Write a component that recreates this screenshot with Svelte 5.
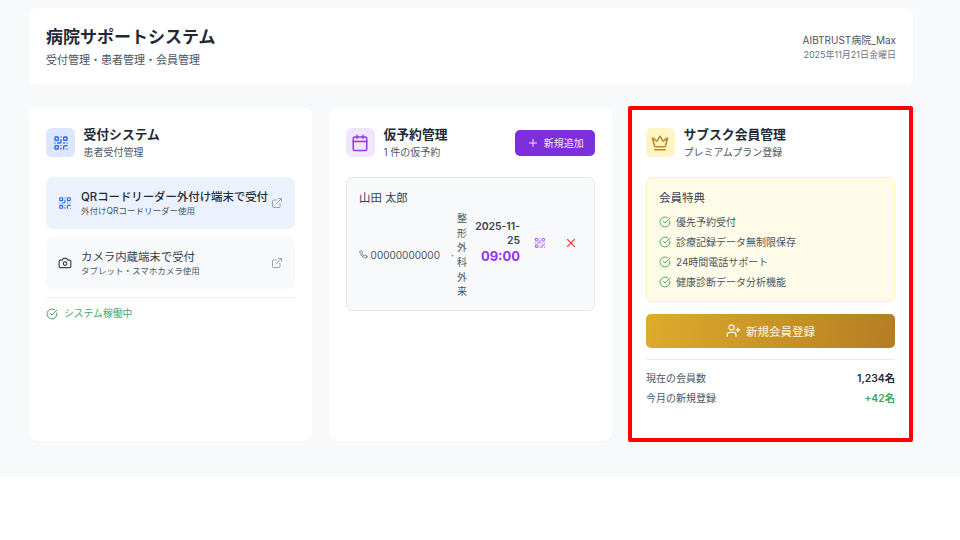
<script>
  const benefits = ['優先予約受付', '診療記録データ無制限保存', '24時間電話サポート', '健康診断データ分析機能'];
</script>

{#snippet qr(size)}
  <svg width={size} height={size} viewBox="0 0 24 24" fill="none" stroke="currentColor" stroke-width="2" stroke-linecap="round" stroke-linejoin="round">
    <rect x="3" y="3" width="5" height="5" rx="1"/><rect x="16" y="3" width="5" height="5" rx="1"/><rect x="3" y="16" width="5" height="5" rx="1"/>
    <path d="M21 16h-3a2 2 0 0 0-2 2v3"/><path d="M21 21v.01"/><path d="M12 7v3a2 2 0 0 1-2 2H7"/><path d="M3 12h.01"/><path d="M12 3h.01"/><path d="M12 16v.01"/><path d="M16 12h1"/><path d="M21 12v.01"/><path d="M12 21v-1"/>
  </svg>
{/snippet}
{#snippet ext()}
  <svg class="ext" width="12" height="12" viewBox="0 0 24 24" fill="none" stroke="currentColor" stroke-width="2" stroke-linecap="round" stroke-linejoin="round">
    <path d="M15 3h6v6"/><path d="M10 14 21 3"/><path d="M18 13v6a2 2 0 0 1-2 2H5a2 2 0 0 1-2-2V8a2 2 0 0 1 2-2h6"/>
  </svg>
{/snippet}
{#snippet check(size)}
  <svg width={size} height={size} viewBox="0 0 24 24" fill="none" stroke="currentColor" stroke-width="2" stroke-linecap="round" stroke-linejoin="round">
    <path d="M21.8 10A10 10 0 1 1 17 3.3"/><path d="m9 11 3 3L22 4"/>
  </svg>
{/snippet}

<div class="page">
  <header class="top">
    <div>
      <h1>病院サポートシステム</h1>
      <p class="lead">受付管理・患者管理・会員管理</p>
    </div>
    <div class="who">
      <div class="user">AIBTRUST病院_Max</div>
      <div class="date">2025年11月21日金曜日</div>
    </div>
  </header>

  <main class="grid">
    <section class="card">
      <div class="head">
        <div class="badge blue">{@render qr(16)}</div>
        <div>
          <h2>受付システム</h2>
          <p class="sub">患者受付管理</p>
        </div>
      </div>
      <button class="opt on">
        <span class="opt-icon blue-t">{@render qr(14)}</span>
        <span class="opt-text"><b class="semi">QRコードリーダー外付け端末で受付</b><small>外付けQRコードリーダー使用</small></span>
        {@render ext()}
      </button>
      <button class="opt">
        <span class="opt-icon">
          <svg width="14" height="14" viewBox="0 0 24 24" fill="none" stroke="currentColor" stroke-width="2" stroke-linecap="round" stroke-linejoin="round"><path d="M14.5 4h-5L7 7H4a2 2 0 0 0-2 2v9a2 2 0 0 0 2 2h16a2 2 0 0 0 2-2V9a2 2 0 0 0-2-2h-3l-2.500-3z"/><circle cx="12" cy="13" r="3"/></svg>
        </span>
        <span class="opt-text"><b>カメラ内蔵端末で受付</b><small>タブレット・スマホカメラ使用</small></span>
        {@render ext()}
      </button>
      <div class="status">{@render check(12)}<span>システム稼働中</span></div>
    </section>

    <section class="card">
      <div class="head">
        <div class="badge purple">
          <svg width="18" height="18" viewBox="0 0 24 24" fill="none" stroke="currentColor" stroke-width="2" stroke-linecap="round" stroke-linejoin="round"><path d="M8 2v4"/><path d="M16 2v4"/><rect x="3" y="4" width="18" height="18" rx="2"/><path d="M3 10h18"/></svg>
        </div>
        <div class="grow">
          <h2>仮予約管理</h2>
          <p class="sub">1 件の仮予約</p>
        </div>
        <button class="add">
          <svg width="12" height="12" viewBox="0 0 24 24" fill="none" stroke="currentColor" stroke-width="2" stroke-linecap="round"><path d="M5 12h14"/><path d="M12 5v14"/></svg>
          <span>新規追加</span>
        </button>
      </div>
      <div class="resv">
        <div class="name">山田 太郎</div>
        <div class="resv-row">
          <div class="phone">
            <svg width="11" height="11" viewBox="0 0 24 24" fill="none" stroke="currentColor" stroke-width="2" stroke-linecap="round" stroke-linejoin="round"><path d="M22 16.900v3a2 2 0 0 1-2.200 2 19.800 19.800 0 0 1-8.600-3.100 19.500 19.500 0 0 1-6-6A19.800 19.800 0 0 1 2.100 4.200 2 2 0 0 1 4.100 2h3a2 2 0 0 1 2 1.700c.1 1 .4 1.900.7 2.800a2 2 0 0 1-.5 2.100L8.100 9.900a16 16 0 0 0 6 6l1.300-1.300a2 2 0 0 1 2.100-.4c.9.300 1.800.6 2.800.7a2 2 0 0 1 1.700 2z"/></svg>
            <span>00000000000</span>
          </div>
          <span class="dot">•</span>
          <div class="dept">整形外科外来</div>
          <div class="when">
            <div class="d">2025-11-25</div>
            <div class="t">09:00</div>
          </div>
          <span class="act qr-a">{@render qr(12)}</span>
          <span class="act x-a">
            <svg width="14" height="14" viewBox="0 0 24 24" fill="none" stroke="currentColor" stroke-width="2" stroke-linecap="round"><path d="M18 6 6 18"/><path d="m6 6 12 12"/></svg>
          </span>
        </div>
      </div>
    </section>

    <section class="card marked">
      <div class="head">
        <div class="badge yellow">
          <svg width="18" height="18" viewBox="0 0 24 24" fill="none" stroke="currentColor" stroke-width="2" stroke-linecap="round" stroke-linejoin="round"><path d="M11.600 3.300a.5.5 0 0 1 .9 0l2.900 5.600a1 1 0 0 0 1.500.3l4.300-3.700a.5.500 0 0 1 .8.500l-2.800 10.200a1 1 0 0 1-1 .7H5.800a1 1 0 0 1-1-.7L2 6a.5.500 0 0 1 .8-.5l4.300 3.700a1 1 0 0 0 1.500-.3z"/><path d="M5 21h14"/></svg>
        </div>
        <div>
          <h2>サブスク会員管理</h2>
          <p class="sub">プレミアムプラン登録</p>
        </div>
      </div>
      <div class="perks">
        <h3>会員特典</h3>
        <ul>
          {#each benefits as b}
            <li>{@render check(12)}<span>{b}</span></li>
          {/each}
        </ul>
      </div>
      <button class="join">
        <svg width="15" height="15" viewBox="0 0 24 24" fill="none" stroke="currentColor" stroke-width="2" stroke-linecap="round" stroke-linejoin="round"><path d="M16 21v-2a4 4 0 0 0-4-4H6a4 4 0 0 0-4 4v2"/><circle cx="9" cy="7" r="4"/><path d="M19 8v6"/><path d="M22 11h-6"/></svg>
        <span>新規会員登録</span>
      </button>
      <div class="stats">
        <div class="stat"><span>現在の会員数</span><b>1,234名</b></div>
        <div class="stat"><span>今月の新規登録</span><b class="plus">+42名</b></div>
      </div>
      <div class="frame"></div>
    </section>
  </main>
</div>

<style>
  :global(body) { margin: 0; background: #fff; }
  .page {
    box-sizing: border-box; height: 477px; padding: 8px 47px 0 29px; background: #f8f9fb;
    font-family: Inter, "Noto Sans CJK JP", sans-serif; color: #1f2937;
  }
  h1, h2, h3, p, ul { margin: 0; padding: 0; }
  button { font-family: inherit; border: 0; cursor: pointer; }
  .top {
    height: 77px; box-sizing: border-box; padding: 0 17px; background: #fff; border-radius: 8px;
    display: flex; justify-content: space-between; align-items: center;
    box-shadow: 0 1px 2px rgba(0,0,0,.02);
  }
  h1 { font-size: 17px; line-height: 24px; font-weight: 700; color: #1f2937; }
  .lead { font-size: 11px; line-height: 16px; color: #4b5563; margin-top: 3px; }
  .who { text-align: right; }
  .user { font-size: 10px; line-height: 14px; font-weight: 400; color: #4b5563; }
  .date { font-size: 9px; line-height: 12px; color: #6b7280; margin-top: 2px; }

  .grid { display: grid; grid-template-columns: repeat(3, 283.200px); column-gap: 16.800px; margin-top: 23px; }
  .card {
    position: relative; box-sizing: border-box; height: 333px; padding: 20px 17px; background: #fff; border-radius: 8px;
    box-shadow: 0 1px 2px rgba(0,0,0,.02);
  }
  .head { display: flex; align-items: center; gap: 8.500px; height: 29px; margin-bottom: 20.400px; }
  .grow { flex: 1; }
  .badge { width: 29px; height: 29px; border-radius: 6px; display: flex; align-items: center; justify-content: center; flex: none; }
  .blue { background: #dbe7fe; color: #2563eb; }
  .purple { background: #f0e6ff; color: #9333ea; }
  .yellow { background: #fef5c3; color: #b8862a; }
  h2 { font-size: 12.800px; line-height: 17px; font-weight: 700; color: #1f2937; }
  .sub { font-size: 10px; line-height: 13px; color: #4b5563; margin-top: 3px; }

  .opt {
    width: 100%; height: 51.500px; margin-bottom: 8.500px; padding: 0 12px; box-sizing: border-box; border-radius: 7px;
    display: flex; align-items: center; background: #f8f9fb; color: #374151; text-align: left;
  }
  .opt.on { background: #ebf2fe; }
  .opt-icon { width: 14px; height: 14px; flex: none; margin-right: 9px; display: block; line-height: 0; color: #374151; }
  .opt-icon.blue-t { color: #2563eb; }
  .opt-text { flex: 1; display: flex; flex-direction: column; min-width: 0; white-space: nowrap; }
  .opt-text b { font-size: 11.400px; line-height: 15px; font-weight: 400; color: #374151; }
  .opt-text b.semi { font-weight: 500; color: #1f2937; }
  .opt-text small { font-size: 8.500px; line-height: 12px; color: #4b5563; }
  .ext { color: #9ca3af; flex: none; margin-left: 4px; }

  .status {
    border-top: 1px solid #eef0f3; padding-top: 9px; display: flex; align-items: center; gap: 6px;
    color: #4aa564; font-size: 9.800px; line-height: 14px;
  }
  .status svg { flex: none; }

  .add {
    width: 80px; height: 26px; border-radius: 5px; background: #7c2fdb; color: #f3e8ff; font-size: 10px;
    display: flex; align-items: center; justify-content: center; gap: 5px; padding: 0; font-weight: 400;
  }
  .resv { border: 1px solid #e5e7eb; background: #f8f9fb; border-radius: 6px; box-sizing: border-box; padding: 11.500px 12px; height: 133.400px; }
  .name { font-size: 11.400px; line-height: 16px; color: #374151; font-weight: 400; }
  .resv-row { display: flex; align-items: center; margin-top: 5px; height: 88px; }
  .phone { flex: none; width: 81px; display: flex; align-items: center; gap: 3px; font-size: 10px; color: #4b5563; }
  .dot { flex: none; width: 3px; font-size: 5px; color: #6b7280; margin-left: 11px; margin-top: 1px; }
  .dept { flex: none; width: 10px; margin-left: 3px; font-size: 10px; line-height: 14.670px; color: #4b5563; text-align: center; word-break: break-all; }
  .when { flex: none; width: 53px; text-align: right; margin-bottom: 25px; }
  .d { font-size: 10.400px; line-height: 14px; font-weight: 600; color: #374151; }
  .t { font-size: 13px; line-height: 17px; font-weight: 700; color: #9333ea; }
  .act { flex: none; display: block; line-height: 0; margin-bottom: 24px; }
  .qr-a { margin-left: 14px; color: #a855f7; }
  .x-a { margin-left: 18px; color: #ef4444; }

  .perks { background: #fefce8; border: 1px solid #fdf3b8; border-radius: 6px; height: 124.300px; box-sizing: border-box; padding: 11.500px 12px; }
  h3 { font-size: 11.500px; line-height: 16px; font-weight: 400; color: #374151; margin-bottom: 6px; }
  ul { list-style: none; }
  li { display: flex; align-items: center; gap: 5px; height: 20px; font-size: 10px; color: #4b5563; }
  li svg { color: #4caf62; flex: none; }
  .join {
    width: 100%; height: 34.300px; margin-top: 12px; border-radius: 5px; color: #fdf6e3; font-size: 11.500px; font-weight: 400;
    background: linear-gradient(100deg, #deab2c, #b47d23); display: flex; align-items: center; justify-content: center; gap: 5px;
  }
  .stats { border-top: 1px solid #e8eaef; margin-top: 11px; padding-top: 8px; }
  .stat { display: flex; justify-content: space-between; align-items: center; height: 20px; font-size: 10px; color: #4b5563; }
  .stat b { font-size: 10.400px; font-weight: 600; color: #1f2937; }
  .stat b.plus { color: #43a356; }
  .frame { position: absolute; inset: -2px -0.800px -1px -1px; border: 4px solid #ff0000; border-radius: 2px; pointer-events: none; }
</style>
